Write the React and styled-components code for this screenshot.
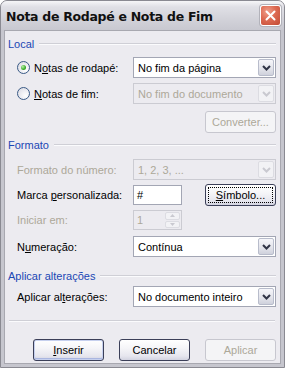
import React from "react";
import styled, { createGlobalStyle, css } from "styled-components";

const Global = createGlobalStyle`
  html, body { margin: 0; padding: 0; background: #fff; }
  body { font-family: "Liberation Sans", Arial, sans-serif; font-size: 11px; }
  * { box-sizing: border-box; }
`;

const Window = styled.div`
  width: 285px;
  height: 368px;
  display: flex;
  flex-direction: column;
  background: #c6c6ce;
  border: 1px solid #8a8a92;
  border-radius: 7px 7px 0 0;
  overflow: hidden;
`;

const TitleBar = styled.div`
  height: 29px;
  flex: none;
  display: flex;
  align-items: center;
  justify-content: space-between;
  padding: 0 3px 0 5px;
  background: linear-gradient(#f6f6f8 0%, #e0e0e6 20%, #d3d3da 60%, #c8c8d0 100%);
`;

const Title = styled.span`
  font-family: "DejaVu Sans", "Liberation Sans", sans-serif;
  font-weight: bold;
  font-size: 12.5px;
  color: #111;
  letter-spacing: -0.3px;
  padding-top: 1px;
`;

const Close = styled.div`
  width: 21px;
  height: 21px;
  border-radius: 3px;
  border: 1px solid #fff;
  background: radial-gradient(circle at 35% 30%, #f0a08c 0%, #dd6a52 45%, #c24a34 100%);
  display: flex;
  align-items: center;
  justify-content: center;
  box-shadow: 0 0 0 1px #b2b2ba;
`;

const Frame = styled.div`
  flex: 1;
  display: flex;
  padding: 0 3px 3px 3px;
`;

const Body = styled.div`
  flex: 1;
  background: #ecebf0;
  border: 1px solid #a8a8b0;
  padding: 6px 4px 0 3px;
  display: flex;
  flex-direction: column;
`;

const Header = styled.div`
  display: flex;
  align-items: center;
  gap: 5px;
  height: 13px;
  color: #1b47b4;
  margin-top: ${p => p.$mt || 0}px;
  &::after {
    content: "";
    flex: 1;
    height: 1px;
    background: #cfcfd6;
    border-bottom: 1px solid #fbfbfd;
    box-sizing: content-box;
  }
`;

const Row = styled.div`
  display: flex;
  align-items: center;
  height: ${p => p.$h || 21}px;
  margin-top: ${p => p.$mt || 0}px;
  padding-left: 9px;
`;

const Label = styled.label`
  width: 116px;
  flex: none;
  display: flex;
  align-items: center;
  color: ${p => (p.$disabled ? "#aca899" : "#000")};
  white-space: nowrap;
`;

const U = styled.span`
  text-decoration: underline;
`;

const Radio = styled.span`
  width: 13px;
  height: 13px;
  border-radius: 50%;
  border: 1px solid #3a5a86;
  background: radial-gradient(circle at 70% 70%, #fff 0%, #e8e8ee 60%, #d4d4dc 100%);
  margin-right: 4px;
  display: flex;
  align-items: center;
  justify-content: center;
  flex: none;
  &::after {
    content: "";
    display: ${p => (p.$checked ? "block" : "none")};
    width: 5px;
    height: 5px;
    border-radius: 50%;
    background: radial-gradient(circle at 35% 35%, #b8f0a8, #3aac2a 60%, #1e8a1a);
  }
`;

const Combo = styled.div`
  width: 143px;
  height: 21px;
  display: flex;
  border: 1px solid ${p => (p.$disabled ? "#cbcbd2" : "#a3a6b4")};
  background: ${p => (p.$disabled ? "#ecebf0" : "#fff")};
  color: ${p => (p.$disabled ? "#aca899" : "#000")};
  padding: 1px;
`;

const ComboText = styled.div`
  flex: 1;
  display: flex;
  align-items: center;
  padding-left: 3px;
  white-space: nowrap;
  overflow: hidden;
`;

const ArrowBtn = styled.div`
  width: 16px;
  flex: none;
  border-radius: 2px;
  border: 1px solid ${p => (p.$disabled ? "#dcdce2" : "#b8bccb")};
  background: ${p =>
    p.$disabled
      ? "#f2f2f5"
      : "linear-gradient(#f6f6fa, #e2e3ea 60%, #cfd1dc)"};
  display: flex;
  align-items: center;
  justify-content: center;
`;

const Chevron = ({ disabled }) => (
  <svg width="9" height="6" viewBox="0 0 9 6">
    <path
      d="M1 1 L4.5 4.5 L8 1"
      fill="none"
      stroke={disabled ? "#c9c9d0" : "#303446"}
      strokeWidth="2"
    />
  </svg>
);

const TextBox = styled.div`
  width: ${p => p.$w || 49}px;
  height: 20px;
  border: 1px solid ${p => (p.$disabled ? "#cbcbd2" : "#a3a6b4")};
  background: ${p => (p.$disabled ? "#ecebf0" : "#fff")};
  color: ${p => (p.$disabled ? "#aca899" : "#000")};
  display: flex;
  align-items: center;
  padding-left: 3px;
`;

const SpinWrap = styled.div`
  width: 49px;
  height: 20px;
  border: 1px solid #cbcbd2;
  background: #ecebf0;
  display: flex;
  padding: 1px;
  color: #aca899;
`;

const SpinText = styled.div`
  flex: 1;
  display: flex;
  align-items: center;
  padding-left: 2px;
`;

const SpinBtns = styled.div`
  width: 15px;
  display: flex;
  flex-direction: column;
  gap: 1px;
`;

const SpinBtn = styled.div`
  flex: 1;
  border: 1px solid #dcdce2;
  border-radius: 2px;
  background: #f2f2f5;
  display: flex;
  align-items: center;
  justify-content: center;
`;

const Spacer = styled.div`
  flex: 1;
`;

const Button = styled.div`
  width: 71px;
  height: 22px;
  flex: none;
  border-radius: 3px;
  border: 1px solid ${p => (p.$disabled ? "#c7c7cf" : "#3b3f58")};
  display: flex;
  align-items: center;
  justify-content: center;
  position: relative;
  color: ${p => (p.$disabled ? "#aca899" : "#000")};
  background: ${p =>
    p.$disabled
      ? "#f4f4f6"
      : "linear-gradient(#ffffff 0%, #f5f5f8 40%, #e6e6ee 80%, #d2d3e0 100%)"};
  ${p =>
    p.$default &&
    css`
      box-shadow: inset 0 0 0 1px #c6d0ee, inset 0 -1px 0 1px #aab6e0;
    `}
  ${p =>
    p.$focus &&
    css`
      &::after {
        content: "";
        position: absolute;
        inset: 2px;
        border: 1px dotted #000;
      }
    `}
`;

const BtnRow = styled.div`
  display: flex;
  justify-content: flex-end;
  gap: 15px;
  margin-top: ${p => p.$mt || 0}px;
`;

const Separator = styled.div`
  height: 1px;
  background: #cfcfd6;
  border-bottom: 1px solid #fbfbfd;
  box-sizing: content-box;
  margin: ${p => p.$mt || 0}px 1px 0 1px;
`;

const ComboBox = ({ value, disabled }) => (
  <Combo $disabled={disabled}>
    <ComboText>{value}</ComboText>
    <ArrowBtn $disabled={disabled}>
      <Chevron disabled={disabled} />
    </ArrowBtn>
  </Combo>
);

export default function App() {
  return (
    <>
      <Global />
      <Window>
        <TitleBar>
          <Title>Nota de Rodapé e Nota de Fim</Title>
          <Close>
            <svg width="11" height="11" viewBox="0 0 11 11">
              <path d="M1.5 1.5 L9.5 9.5 M9.5 1.5 L1.5 9.5" stroke="#fff" strokeWidth="2" strokeLinecap="round" />
            </svg>
          </Close>
        </TitleBar>
        <Frame>
          <Body>
            <Header>Local</Header>
            <Row $mt={7}>
              <Label>
                <Radio $checked />
                <span>N<U>o</U>tas de rodapé:</span>
              </Label>
              <ComboBox value="No fim da página" />
            </Row>
            <Row $mt={5}>
              <Label>
                <Radio />
                <span><U>N</U>otas de fim:</span>
              </Label>
              <ComboBox value="No fim do documento" disabled />
            </Row>
            <BtnRow $mt={7}>
              <Button $disabled>Converter...</Button>
            </BtnRow>

            <Header $mt={5}>Formato</Header>
            <Row $mt={8}>
              <Label $disabled><span>Formato do número:</span></Label>
              <ComboBox value="1, 2, 3, ..." disabled />
            </Row>
            <Row $mt={4} $h={22}>
              <Label><span>Marca <U>p</U>ersonalizada:</span></Label>
              <TextBox>#</TextBox>
              <Spacer />
              <Button $focus>
                <span><U>S</U>ímbolo...</span>
              </Button>
            </Row>
            <Row $mt={4} $h={20}>
              <Label $disabled><span>Iniciar em:</span></Label>
              <SpinWrap>
                <SpinText>1</SpinText>
                <SpinBtns>
                  <SpinBtn>
                    <svg width="5" height="3" viewBox="0 0 5 3"><path d="M0 3 L2.5 0 L5 3 Z" fill="#c9c9d0" /></svg>
                  </SpinBtn>
                  <SpinBtn>
                    <svg width="5" height="3" viewBox="0 0 5 3"><path d="M0 0 L2.5 3 L5 0 Z" fill="#c9c9d0" /></svg>
                  </SpinBtn>
                </SpinBtns>
              </SpinWrap>
            </Row>
            <Row $mt={6}>
              <Label><span>N<U>u</U>meração:</span></Label>
              <ComboBox value="Contínua" />
            </Row>

            <Header $mt={12}>Aplicar alterações</Header>
            <Row $mt={4}>
              <Label><span>Aplicar al<U>t</U>erações:</span></Label>
              <ComboBox value="No documento inteiro" />
            </Row>
            <Separator $mt={13} />
            <BtnRow $mt={17}>
              <Button $default>
                <span><U>I</U>nserir</span>
              </Button>
              <Button>Cancelar</Button>
              <Button $disabled>Aplicar</Button>
            </BtnRow>
          </Body>
        </Frame>
      </Window>
    </>
  );
}
